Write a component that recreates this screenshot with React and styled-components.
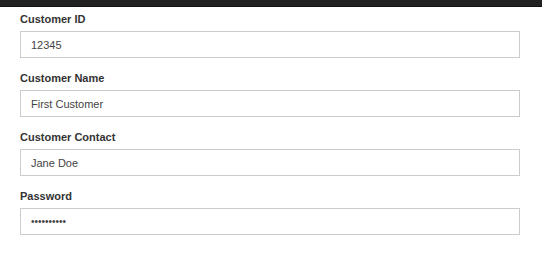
import React from 'react'
import styled, { createGlobalStyle } from 'styled-components'

const GlobalStyle = createGlobalStyle`
  body {
    margin: 0;
    background: #fff;
    font-family: "Liberation Sans", Arial, sans-serif;
  }
`

const TopBar = styled.div`
  height: 6px;
  background: #222;
  border-bottom: 1px solid #111;
`

const Form = styled.form`
  padding: 5px 22px 0 20px;
  display: flex;
  flex-direction: column;
  gap: 13px;
`

const Field = styled.div`
  display: flex;
  flex-direction: column;
`

const Label = styled.label`
  font-size: 11px;
  line-height: 14px;
  font-weight: bold;
  color: #333;
  margin-bottom: 5px;
`

const Input = styled.input`
  box-sizing: border-box;
  width: 500px;
  height: 27px;
  border: 1px solid #ccc;
  padding: 0 10px;
  font-family: "Liberation Sans", Arial, sans-serif;
  font-size: ${(p) => (p.type === 'password' ? '10px' : '11px')};
  color: #444;
  background: #fff;
  outline: none;
  border-radius: 0;
`

const fields = [
  { id: 'cid', label: 'Customer ID', value: '12345' },
  { id: 'cname', label: 'Customer Name', value: 'First Customer' },
  { id: 'ccontact', label: 'Customer Contact', value: 'Jane Doe' },
  { id: 'pwd', label: 'Password', value: 'secret1234', type: 'password' },
]

const App = () => {
  return (
    <>
      <GlobalStyle />
      <TopBar />
      <Form onSubmit={(e) => e.preventDefault()}>
        {fields.map((f) => (
          <Field key={f.id}>
            <Label htmlFor={f.id}>{f.label}</Label>
            <Input id={f.id} type={f.type || 'text'} defaultValue={f.value} />
          </Field>
        ))}
      </Form>
    </>
  )
}

export default App
